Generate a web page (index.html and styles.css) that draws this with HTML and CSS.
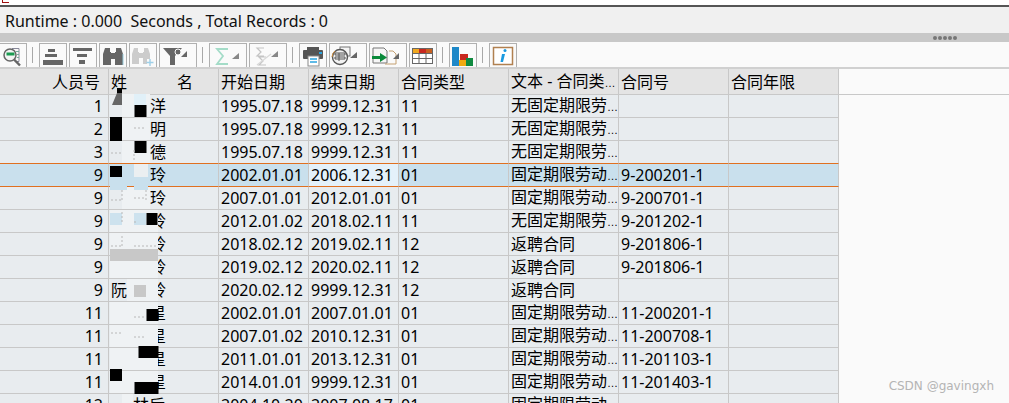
FILE: index.html
```html
<!DOCTYPE html>
<html lang="zh">
<head>
<meta charset="utf-8">
<title>Runtime</title>
<link rel="stylesheet" href="styles.css">
</head>
<body>
<div class="topstrip"><span class="redcorner"></span></div>
<div class="status">Runtime : 0.000&nbsp; Seconds , Total Records : 0</div>
<div class="splitter"><span class="grip"><i></i><i></i><i></i><i></i><i></i></span></div>
<div class="toolbar">
  <button class="tb w27"><svg width="27" height="24" viewBox="0 0 27 24"><path d="M13 4.500h7v13h-3" fill="none" stroke="#889" stroke-width="1"/><path d="M17 7.500h3M18 10.500h2M18 13.500h2" stroke="#7a9" stroke-width="1"/><circle cx="11" cy="11" r="6" fill="#f4f4f4" stroke="#666" stroke-width="1.500"/><rect x="7.500" y="8.500" width="8" height="3" fill="#1a9a50"/><path d="M15 15.500l6 6" stroke="#666" stroke-width="2.400"/></svg></button>
  <span class="sep"></span>
  <button class="tb w28"><svg width="28" height="24" viewBox="0 0 28 24"><path fill="#666" d="M9 5h7v3H9zM6 10h12v3H6zM4 16h20v5H4z"/></svg></button>
  <button class="tb w28"><svg width="28" height="24" viewBox="0 0 28 24"><path fill="#666" d="M4 4h19v3H4zM8 10h10v3H8zM10 16h6v4h-6z"/></svg></button>
  <button class="tb w28"><svg width="28" height="24" viewBox="0 0 28 24"><path fill="#666" d="M6 4h5v4h1v13H4V10zM17 4h5l2 6v11h-8V8h1zM12 9h4v6h-4z"/><path d="M24 10v11" stroke="#9cd" stroke-width="1"/></svg></button>
  <button class="tb w28"><svg width="28" height="24" viewBox="0 0 28 24"><path fill="#ccc" d="M5 4h4v4h1v12H3V10zM15 4h4l2 6v5h-3v5h-4V8h1zM10 9h4v5h-4z"/><path d="M21 15v7M17.500 18.500h7" stroke="#9fd0e8" stroke-width="1.400" fill="none"/></svg></button>
  <button class="tb w38"><svg width="38" height="24" viewBox="0 0 38 24"><path fill="#666" d="M4 4h19l-7 8v9h-5v-9z"/><circle cx="19" cy="8" r="3" fill="#666" stroke="#fafafa"/><path fill="#666" d="M22 13l6-6v6z"/></svg></button>
  <span class="sep"></span>
  <button class="tb w38 dim"><svg width="38" height="24" viewBox="0 0 38 24"><path d="M19 5h-11l6 7-6 8h11" fill="none" stroke="#a4dcc8" stroke-width="1.800"/><path fill="#888" d="M23 15l7-6v6z"/></svg></button>
  <button class="tb w38 dim"><svg width="38" height="24" viewBox="0 0 38 24"><path d="M15 4h-7l4 4-4 4h7M17 21h-7l4-4-4-4h7" fill="none" stroke="#c4c4c4" stroke-width="1.200"/><path d="M8 21l14-11" stroke="#d8d8d8" stroke-width="1.200"/><path fill="#888" d="M22 13l7-6v6z"/></svg></button>
  <span class="sep"></span>
  <button class="tb w28"><svg width="28" height="24" viewBox="0 0 28 24"><path fill="#555" d="M8 3h12v3H8z"/><rect x="4" y="6" width="20" height="9" rx="1" fill="#555"/><rect x="20" y="8" width="3" height="2" fill="#2aa4e0"/><rect x="9" y="12" width="11" height="10" fill="#fff" stroke="#888" stroke-width="1"/><path d="M11 15h7M11 18h7" stroke="#2aa4e0" stroke-width="1.400"/></svg></button>
  <button class="tb w38"><svg width="38" height="24" viewBox="0 0 38 24"><rect x="11" y="3" width="10" height="9" fill="#f4f4f4" stroke="#777"/><circle cx="11" cy="13" r="7.500" fill="#f2f2f2" stroke="#555" stroke-width="1.400"/><path d="M6 9h10v2H6zM6 13h10v2H6zM10 9v8" stroke="#555" stroke-width="1" fill="none"/><path d="M3 13a8 8 0 0 1 3-6" stroke="#d09040" fill="none"/><path fill="#666" d="M21 14l7-6v6z"/></svg></button>
  <button class="tb w38"><svg width="38" height="24" viewBox="0 0 38 24"><path d="M4 4h11l3 3v12H4z" fill="#f6f6f6" stroke="#777"/><path d="M20 7h4l3 3v10H16" fill="none" stroke="#c4a070"/><path d="M3 12h8V9l7 4.500-7 4.500v-3H3z" fill="#0a8a3a"/><path fill="#666" d="M24 15l6-6v6z"/></svg></button>
  <button class="tb w28"><svg width="28" height="24" viewBox="0 0 28 24"><rect x="3.500" y="4.500" width="20" height="15" fill="#fff" stroke="#666"/><path fill="#f0a820" d="M4 5h6v4H4z"/><path fill="#c82820" d="M10 5h7v4h-7z"/><path fill="#c86020" d="M17 5h6v4h-6z"/><path d="M3 9.500h21M3 14.500h21M10 9v11M17 9v11" stroke="#666"/></svg></button>
  <span class="sep"></span>
  <button class="tb w28"><svg width="28" height="24" viewBox="0 0 28 24"><rect x="3" y="3" width="7" height="19" fill="#1e88c8"/><rect x="11" y="10" width="8" height="12" fill="#c8281e"/><rect x="10" y="16" width="7" height="6" fill="#f0aa10"/><rect x="17" y="14" width="7" height="8" fill="#108a40"/></svg></button>
  <span class="sep"></span>
  <button class="tb w28"><svg width="28" height="24" viewBox="0 0 28 24"><rect x="4.500" y="3.500" width="19" height="17" fill="#fff" stroke="#b08050" stroke-width="1.500"/><circle cx="16" cy="6.500" r="1.500" fill="#1a9ae0"/><path d="M13 10h3l-2 8h-2.500" fill="#1a9ae0"/></svg></button>
</div>
<div class="toolrule"></div>
<div class="gridwrap">
<table class="grid">
  <colgroup><col class="c1"><col class="c2"><col class="c3"><col class="c3"><col class="c4"><col class="c2"><col class="c2"><col class="c2"></colgroup>
  <thead>
    <tr>
      <th class="num">人员号</th><th><span class="split"><span>姓</span><span>名</span></span></th><th>开始日期</th><th>结束日期</th><th>合同类型</th><th>文本 - 合同类<span class="dots">…</span></th><th>合同号</th><th>合同年限</th>
    </tr>
  </thead>
  <tbody>
    <tr><td class="num">1</td><td class="name"><span class="nm">洋</span></td><td>1995.07.18</td><td>9999.12.31</td><td>11</td><td class="zh">无固定期限劳<span class="dots">…</span></td><td></td><td></td></tr>
    <tr><td class="num">2</td><td class="name"><span class="nm">明</span></td><td>1995.07.18</td><td>9999.12.31</td><td>11</td><td class="zh">无固定期限劳<span class="dots">…</span></td><td></td><td></td></tr>
    <tr><td class="num">3</td><td class="name"><span class="nm">德</span></td><td>1995.07.18</td><td>9999.12.31</td><td>11</td><td class="zh">无固定期限劳<span class="dots">…</span></td><td></td><td></td></tr>
    <tr class="sel"><td class="num">9</td><td class="name"><span class="nm">玲</span></td><td>2002.01.01</td><td class="focus">2006.12.31</td><td>01</td><td class="zh">固定期限劳动<span class="dots">…</span></td><td>9-200201-1</td><td></td></tr>
    <tr><td class="num">9</td><td class="name"><span class="nm">玲</span></td><td>2007.01.01</td><td>2012.01.01</td><td>01</td><td class="zh">固定期限劳动<span class="dots">…</span></td><td>9-200701-1</td><td></td></tr>
    <tr><td class="num">9</td><td class="name"><span class="nm">玲</span></td><td>2012.01.02</td><td>2018.02.11</td><td>11</td><td class="zh">无固定期限劳<span class="dots">…</span></td><td>9-201202-1</td><td></td></tr>
    <tr><td class="num">9</td><td class="name"><span class="nm">玲</span></td><td>2018.02.12</td><td>2019.02.11</td><td>12</td><td class="zh">返聘合同</td><td>9-201806-1</td><td></td></tr>
    <tr><td class="num">9</td><td class="name"><span class="nm">玲</span></td><td>2019.02.12</td><td>2020.02.11</td><td>12</td><td class="zh">返聘合同</td><td>9-201806-1</td><td></td></tr>
    <tr><td class="num">9</td><td class="name"><span class="sur">阮</span><span class="nm">玲</span></td><td>2020.02.12</td><td>9999.12.31</td><td>12</td><td class="zh">返聘合同</td><td></td><td></td></tr>
    <tr><td class="num">11</td><td class="name"><span class="nm">星</span></td><td>2002.01.01</td><td>2007.01.01</td><td>01</td><td class="zh">固定期限劳动<span class="dots">…</span></td><td>11-200201-1</td><td></td></tr>
    <tr><td class="num">11</td><td class="name"><span class="nm">星</span></td><td>2007.01.02</td><td>2010.12.31</td><td>01</td><td class="zh">固定期限劳动<span class="dots">…</span></td><td>11-200708-1</td><td></td></tr>
    <tr><td class="num">11</td><td class="name"><span class="nm">星</span></td><td>2011.01.01</td><td>2013.12.31</td><td>01</td><td class="zh">固定期限劳动<span class="dots">…</span></td><td>11-201103-1</td><td></td></tr>
    <tr><td class="num">11</td><td class="name"><span class="nm">星</span></td><td>2014.01.01</td><td>9999.12.31</td><td>01</td><td class="zh">固定期限劳动<span class="dots">…</span></td><td>11-201403-1</td><td></td></tr>
    <tr><td class="num">12</td><td class="name"><span class="nm2">林后</span></td><td>2004.10.20</td><td>2007.08.17</td><td>01</td><td class="zh">固定期限劳动<span class="dots">…</span></td><td></td><td></td></tr>
  </tbody>
</table>
<svg class="redact" width="60" height="334" viewBox="108 69 60 334">
  <g fill="#eff2f4">
    <rect x="122" y="94" width="28" height="23"/><rect x="122" y="118" width="28" height="22"/><rect x="122" y="141" width="28" height="22"/>
    <rect x="122" y="187" width="28" height="22"/><rect x="110" y="210" width="48" height="22"/><rect x="110" y="233" width="48" height="22"/>
    <rect x="110" y="256" width="48" height="22"/><rect x="127" y="279" width="31" height="22"/><rect x="110" y="302" width="48" height="22"/>
    <rect x="110" y="325" width="48" height="22"/><rect x="110" y="348" width="48" height="22"/><rect x="110" y="371" width="48" height="22"/>
    <rect x="122" y="394" width="11" height="9"/>
  </g>
  <rect x="122" y="164" width="12" height="22" fill="#c9e0ed"/>
  <rect x="134" y="164" width="14" height="13" fill="#ebeff1"/>
  <rect x="134" y="177" width="14" height="13" fill="#c9e0ed"/>
  <rect x="110" y="177" width="17" height="13" fill="#c9e0ed"/>
  <rect x="134" y="94" width="12" height="11" fill="#e1f0f8"/>
  <rect x="110" y="213" width="12" height="12" fill="#cde2ee"/>
  <rect x="134" y="213" width="12" height="12" fill="#cde2ee"/>
  <rect x="110" y="249" width="48" height="12" fill="#c8c8c8"/>
  <rect x="134" y="285" width="12" height="12" fill="#c8c8c8"/>
  <path fill="#666" d="M112 105l5-12h5v12z"/>
  <g fill="#000">
    <rect x="117" y="88" width="5" height="5"/>
    <rect x="134.500" y="105" width="12" height="12"/>
    <rect x="110" y="117" width="12" height="24"/>
    <rect x="134.500" y="141" width="12" height="12"/>
    <rect x="110" y="166" width="12" height="11"/>
    <rect x="146.500" y="213" width="11" height="12"/>
    <rect x="146.500" y="309" width="12" height="12"/>
    <rect x="138.500" y="346" width="20" height="12"/>
    <rect x="110" y="369" width="12" height="12"/>
    <rect x="134.500" y="382" width="24" height="12"/>
  </g>
  <g stroke="#b8b8b8" stroke-dasharray="2 2" fill="none">
    <path d="M134 128h11M111 153h10M134 198h12M111 200h11M134 222h3M111 246h10M134 246h22M134 317h10M134 337h10M111 333h11"/>
    <path d="M122 190v12M122 212v12M122 236v12M146 190v12M134 150v10"/>
  </g>
</svg>
</div>
<div class="watermark">CSDN @gavingxh</div>
</body>
</html>
```
FILE: styles.css
```css
html, body { margin: 0; padding: 0; height: 403px; overflow: hidden; background: #fafafa; }
body { position: relative; font-family: "Noto Sans", "Noto Sans CJK SC", sans-serif; font-size: 16px; color: #000; }
.topstrip { height: 5px; background: #fff; border-bottom: 2px solid #555; position: relative; overflow: hidden; }
.redcorner { display: block; width: 6px; height: 2px; margin-left: 2px; border-left: 1px solid #a01010; border-bottom: 1px solid #a01010; }
.status { height: 26px; line-height: 28px; background: #f0f0f0; padding-left: 5px; font-size: 16px; white-space: pre; color: #111; }
.splitter { height: 9px; background: #c8c8c8; display: flex; justify-content: flex-end; align-items: center; padding-right: 52px; }
.grip { display: flex; gap: 1px; }
.grip i { display: block; width: 4px; height: 4px; border-radius: 50%; background: #777; }
.toolbar { height: 25px; background: #fafafa; display: flex; align-items: flex-start; gap: 2px; padding-top: 1px; box-sizing: border-box; }
.tb { padding: 0; margin: 0; height: 24px; background: #fafafa; border: 1px solid #b0b0b0; border-bottom: none; box-sizing: border-box; display: block; overflow: hidden; }
.tb svg { display: block; margin: -1px; }
.w27 { width: 27px; border-left: none; }
.w28 { width: 28px; }
.w38 { width: 38px; }
.sep { width: 1px; height: 16px; margin: 4px 4px 0 3px; background: #a8a8a8; }
.toolrule { height: 2px; background: #d0d0d0; }
.gridwrap { position: relative; }
.gridwrap::after { content: ""; position: absolute; left: 839px; right: 0; top: 25px; height: 1px; background: #c8c8c8; }
.grid { border-collapse: separate; border-spacing: 0; table-layout: fixed; width: 839px; }
.c1 { width: 109px; }
.c2 { width: 110px; }
.c3 { width: 90px; }
.c4 { width: 110px; }
.grid th, .grid td { padding: 0 0 0 2px; border-right: 1px solid #c8c8c8; border-bottom: 1px solid #c8c8c8; box-sizing: border-box; white-space: nowrap; overflow: hidden; font-weight: 400; text-align: left; line-height: 20px; }
.grid th { height: 26px; background: #e4e4e4; }
.grid td { height: 23px; background: #e8ecef; }
.grid .num { text-align: right; padding-right: 5px; padding-left: 0; }
.grid th.num { padding-right: 8px; }
.split { display: flex; justify-content: space-between; padding-right: 25px; }
.dots { font-family: "Liberation Sans", sans-serif; font-size: 11px; }
.grid td.name { padding-left: 41px; position: relative; }
.sur { position: absolute; left: 2px; top: 1px; }
.nm, .nm2 { display: block; }
.nm2 { margin-left: -17px; }
.grid .sel td { background: #c9e0ed; border-bottom-color: #e07020; }
.grid .sel td.focus { background: #e4f1fa; }
.grid tr:nth-child(3) td { border-bottom-color: #e07020; }
.redact { position: absolute; left: 108px; top: 0; pointer-events: none; }
.watermark { position: absolute; right: 15px; top: 379px; font-family: "DejaVu Sans", sans-serif; font-size: 12px; color: #b4b4b4; }
```
